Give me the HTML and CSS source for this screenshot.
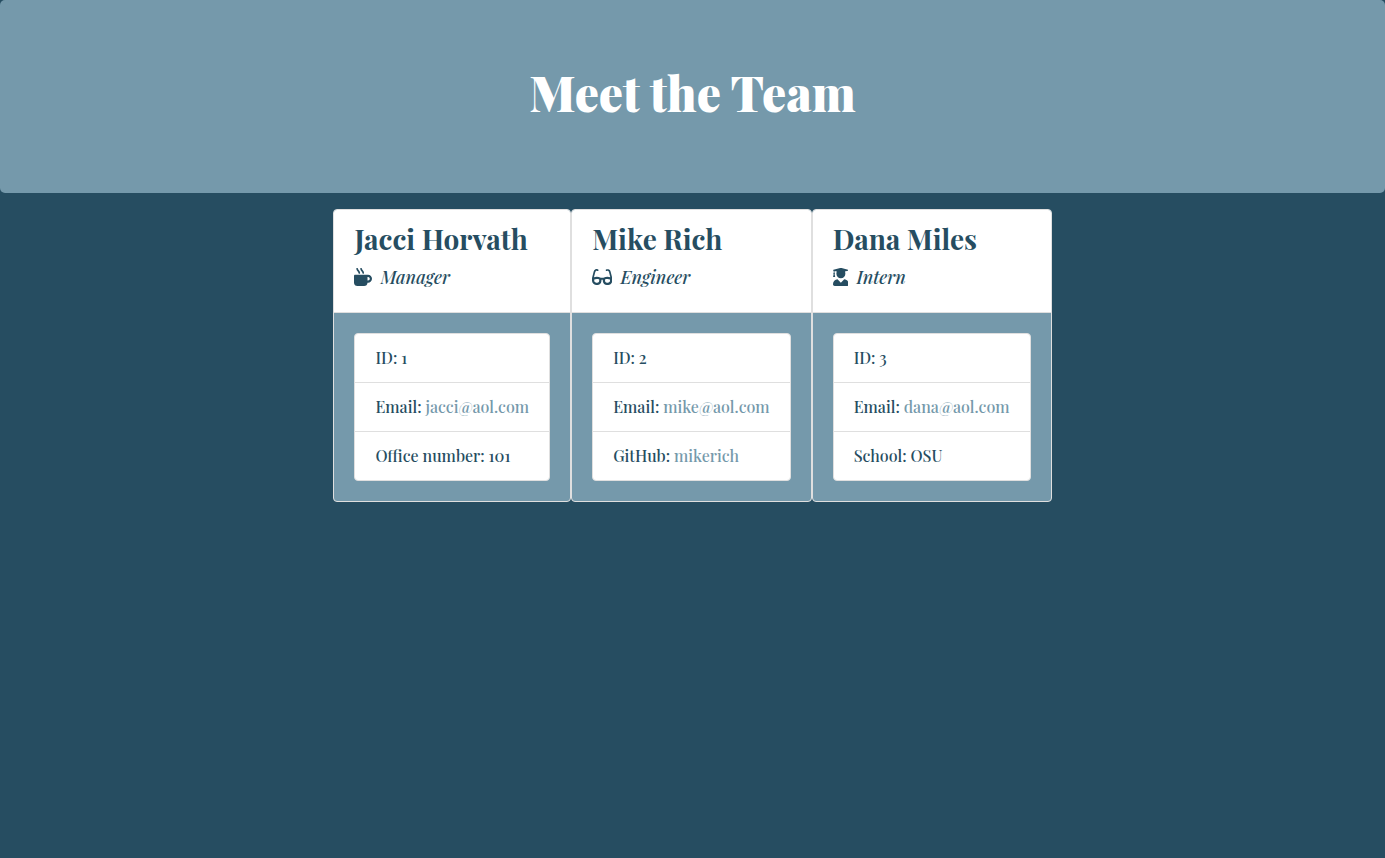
FILE: index.html
```html
<!DOCTYPE html>
<html lang="en">
<head>
<meta charset="utf-8">
<meta name="viewport" content="width=device-width, initial-scale=1">
<title>Meet the Team</title>
<link rel="stylesheet" href="styles.css">
</head>
<body>
<header class="banner"><h1 class="banner-title">Meet the Team</h1></header>
<main class="team">
  <section class="card">
    <div class="card-header">
      <h2 class="name">Jacci Horvath</h2>
      <p class="role"><svg class="icon" viewBox="0 0 512 512" aria-hidden="true"><path d="M127.1 146.5c1.3 7.7 8 13.5 16 13.5h16.5c9.8 0 17.6-8.5 16.3-18-3.8-28.2-16.4-54.2-36.6-74.7-14.4-14.7-23.6-33.3-26.4-53.5C111.8 5.9 105 0 96.8 0H80.4C70.6 0 63 8.5 64.1 18c3.9 31.9 18 61.3 40.6 84.4 12 12.2 19.7 27.5 22.4 44.1zm112 0c1.3 7.7 8 13.5 16 13.5h16.5c9.8 0 17.6-8.5 16.3-18-3.8-28.2-16.4-54.2-36.6-74.7-14.4-14.7-23.6-33.3-26.4-53.5C223.8 5.9 217 0 208.8 0h-16.4c-9.8 0-17.5 8.5-16.3 18 3.9 31.9 18 61.3 40.6 84.4 12 12.2 19.7 27.5 22.4 44.1zM400 192H32c-17.7 0-32 14.3-32 32v192c0 53 43 96 96 96h192c53 0 96-43 96-96h16c61.8 0 112-50.2 112-112s-50.2-112-112-112zm0 160h-16v-96h16c26.5 0 48 21.5 48 48s-21.5 48-48 48z"/></svg><em>Manager</em></p>
    </div>
    <div class="card-body">
      <ul class="details">
        <li>ID: 1</li>
        <li>Email: <a href="mailto:jacci@aol.com">jacci@aol.com</a></li>
        <li>Office number: 101</li>
      </ul>
    </div>
  </section>
  <section class="card">
    <div class="card-header">
      <h2 class="name">Mike Rich</h2>
      <p class="role"><svg class="icon" viewBox="0 0 576 512" aria-hidden="true"><path d="M574.1 280.37L528.75 98.66c-5.91-23.7-21.59-44.05-43-55.81-21.44-11.73-46.97-14.11-70.19-6.33l-15.25 5.08c-8.39 2.79-12.92 11.86-10.12 20.24l5.06 15.18c2.79 8.38 11.85 12.91 20.23 10.12l13.18-4.39c10.87-3.62 23-3.57 33.16 1.73 10.29 5.37 17.57 14.56 20.37 25.82l38.46 153.82c-22.19-6.81-49.79-12.46-81.2-12.46-34.77 0-73.98 7.02-114.85 26.74h-73.18c-40.87-19.74-80.08-26.75-114.86-26.75-31.42 0-59.02 5.65-81.21 12.46l38.46-153.83c2.79-11.25 10.09-20.45 20.38-25.81 10.16-5.3 22.28-5.35 33.15-1.73l13.17 4.39c8.38 2.79 17.44-1.74 20.23-10.12l5.06-15.18c2.8-8.38-1.73-17.45-10.12-20.24l-15.25-5.08c-23.22-7.78-48.75-5.41-70.19 6.33-21.41 11.77-37.09 32.11-43 55.8L1.9 280.37A64.218 64.218 0 0 0 0 295.86v70.25C0 429.01 51.58 480 115.2 480h37.12c60.28 0 110.37-45.94 114.88-105.37l2.93-38.63h35.75l2.93 38.63C313.31 434.06 363.4 480 423.68 480h37.12c63.62 0 115.2-50.99 115.2-113.88v-70.25c0-5.23-.64-10.43-1.9-15.5zm-370.72 89.42c-1.97 25.91-24.4 46.21-51.06 46.21H115.2C86.97 416 64 393.62 64 366.11v-37.54c18.12-6.49 43.42-12.92 72.58-12.92 23.86 0 47.26 4.33 69.93 12.92l-3.13 41.22zM512 366.12c0 27.51-22.97 49.88-51.2 49.88h-37.12c-26.67 0-49.1-20.3-51.06-46.21l-3.13-41.22c22.67-8.59 46.08-12.92 69.95-12.92 29.12 0 54.43 6.44 72.55 12.93v37.54z"/></svg><em>Engineer</em></p>
    </div>
    <div class="card-body">
      <ul class="details">
        <li>ID: 2</li>
        <li>Email: <a href="mailto:mike@aol.com">mike@aol.com</a></li>
        <li>GitHub: <a href="https://github.com/mikerich">mikerich</a></li>
      </ul>
    </div>
  </section>
  <section class="card">
    <div class="card-header">
      <h2 class="name">Dana Miles</h2>
      <p class="role"><svg class="icon" viewBox="0 0 448 512" aria-hidden="true"><path d="M319.4 320.6L224 416l-95.4-95.4C57.1 323.7 0 382.2 0 454.4v9.6c0 26.5 21.5 48 48 48h352c26.5 0 48-21.5 48-48v-9.6c0-72.2-57.1-130.7-128.6-133.8zM13.6 79.8l6.4 1.5v58.4c-7 4.2-12 11.5-12 20.3 0 8.4 4.6 15.4 11.1 19.7L3.5 242c-1.7 6.9 2.1 14 7.6 14h41.8c5.5 0 9.3-7.1 7.6-14l-15.6-62.3C51.4 175.4 56 168.4 56 160c0-8.8-5-16.1-12-20.3V87.1l66 15.9c-8.6 17.2-14 36.4-14 57 0 70.7 57.3 128 128 128s128-57.3 128-128c0-20.6-5.3-39.8-14-57l96.3-23.2c18.2-4.4 18.2-27.1 0-31.5l-190.4-46c-13-3.1-26.7-3.1-39.7 0L13.6 48.2c-18.1 4.4-18.1 27.2 0 31.6z"/></svg><em>Intern</em></p>
    </div>
    <div class="card-body">
      <ul class="details">
        <li>ID: 3</li>
        <li>Email: <a href="mailto:dana@aol.com">dana@aol.com</a></li>
        <li>School: OSU</li>
      </ul>
    </div>
  </section>
</main>
</body>
</html>
```

FILE: styles.css
```css
* {
  box-sizing: border-box;
}

body {
  margin: 0;
  min-height: 100vh;
  background: #264d61;
  color: #264d61;
  font-family: "Playfair Display", "Liberation Serif", serif;
  font-size: 16px;
  font-weight: 500;
  line-height: 24px;
}

.banner {
  margin-bottom: 16px;
  padding: 64px 32px 72px;
  border-radius: 5px;
  background: #7599ab;
  color: #fff;
  text-align: center;
}

.banner-title {
  margin: 0;
  font-size: 48px;
  font-weight: 900;
  line-height: 57px;
}

.team {
  display: flex;
  flex-wrap: wrap;
  justify-content: center;
}

.card {
  overflow: hidden;
  border: 1px solid #dfdfdf;
  border-radius: 4px;
  background: #7599ab;
}

.card-header {
  padding: 12px 20px 20px;
  border-bottom: 1px solid #dfdfdf;
  background: #fff;
}

.name {
  margin: 0 0 8px;
  font-size: 28px;
  font-weight: 700;
  line-height: 34px;
}

.role {
  display: flex;
  align-items: center;
  gap: 8px;
  margin: 0;
  padding-bottom: 2px;
  font-size: 18px;
  line-height: 26px;
}

.icon {
  height: 18px;
  fill: currentColor;
}

.card-body {
  padding: 20px;
}

.details {
  margin: 0;
  padding: 0;
  overflow: hidden;
  border: 1px solid #dfdfdf;
  border-radius: 4px;
  background: #fff;
  list-style: none;
}

.details li {
  padding: 12px 20px;
}

.details li + li {
  border-top: 1px solid #dfdfdf;
}

.details a {
  color: #7599ab;
  text-decoration: none;
}
```
